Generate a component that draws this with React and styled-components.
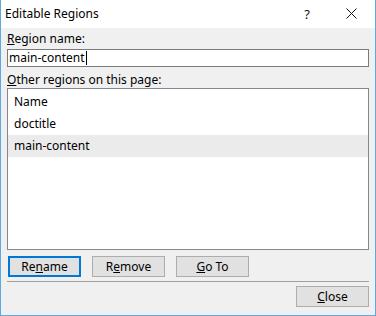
import React from 'react';
import styled, { createGlobalStyle } from 'styled-components';

const GlobalStyle = createGlobalStyle`
  html, body {
    margin: 0;
    padding: 0;
    background: #ffffff;
  }
  body {
    font-family: "Noto Sans", "DejaVu Sans", sans-serif;
    font-size: 12px;
    color: #000000;
  }
`;

const Window = styled.div`
  width: 376px;
  height: 316px;
  box-sizing: border-box;
  border: 1px solid #5aa9e0;
  border-top: none;
  background: #f0f0f0;
  display: flex;
  flex-direction: column;
`;

const TitleBar = styled.div`
  height: 28px;
  background: #ffffff;
  display: flex;
  align-items: center;
  padding: 0 2px 1px 4px;
  box-sizing: border-box;
`;

const Title = styled.span`
  flex: 1;
  font-size: 12px;
`;

const TitleButton = styled.div`
  width: 44px;
  height: 27px;
  display: flex;
  align-items: center;
  justify-content: center;
  font-size: 13px;
  color: #111;
`;

const Body = styled.div`
  flex: 1;
  display: flex;
  flex-direction: column;
  padding: 0 6px;
`;

const Label = styled.div`
  line-height: 16px;
  margin-top: ${p => p.$top}px;
`;

const TextBox = styled.div`
  margin-top: 2px;
  height: 18px;
  box-sizing: border-box;
  border: 1px solid #7a7a7a;
  background: #ffffff;
  display: flex;
  align-items: center;
  padding-left: 1px;
  line-height: 16px;
`;

const Caret = styled.span`
  display: inline-block;
  width: 1px;
  height: 14px;
  background: #000;
  margin-left: 1px;
`;

const ListBox = styled.div`
  height: 162px;
  box-sizing: border-box;
  border: 1px solid #828790;
  background: #ffffff;
  padding-top: 2px;
`;

const Row = styled.div`
  height: 22px;
  line-height: 22px;
  padding-left: 6px;
  background: ${p => (p.$selected ? '#ebebeb' : 'transparent')};
`;

const ButtonRow = styled.div`
  display: flex;
  gap: 11px;
  margin-top: 6px;
  padding-left: 1px;
`;

const Button = styled.div`
  width: 73px;
  height: 21px;
  box-sizing: border-box;
  background: #e1e1e1;
  border: ${p => (p.$focused ? '2px solid #0078d7' : '1px solid #adadad')};
  display: flex;
  align-items: center;
  justify-content: center;
`;

const Separator = styled.div`
  margin-top: 4px;
  height: 1px;
  background: #a0a0a0;
`;

const CloseRow = styled.div`
  display: flex;
  justify-content: flex-end;
  margin-top: 4px;
`;

const CloseIcon = () => (
  <svg width="11" height="11" viewBox="0 0 11 11">
    <path d="M0.5 0.5 L10.5 10.5 M10.5 0.5 L0.5 10.5" stroke="#111" strokeWidth="1" fill="none" />
  </svg>
);

export default function App() {
  return (
    <>
      <GlobalStyle />
      <Window>
        <TitleBar>
          <Title>Editable Regions</Title>
          <TitleButton>?</TitleButton>
          <TitleButton>
            <CloseIcon />
          </TitleButton>
        </TitleBar>
        <Body>
          <Label $top={3}>
            <u>R</u>egion name:
          </Label>
          <TextBox>
            main-content
            <Caret />
          </TextBox>
          <Label $top={5}>
            <u>O</u>ther regions on this page:
          </Label>
          <ListBox>
            <Row>Name</Row>
            <Row>doctitle</Row>
            <Row $selected>main-content</Row>
          </ListBox>
          <ButtonRow>
            <Button $focused>
              <span>
                Re<u>n</u>ame
              </span>
            </Button>
            <Button>
              <span>
                R<u>e</u>move
              </span>
            </Button>
            <Button>
              <span>
                <u>G</u>o To
              </span>
            </Button>
          </ButtonRow>
          <Separator />
          <CloseRow>
            <Button>
              <span>
                <u>C</u>lose
              </span>
            </Button>
          </CloseRow>
        </Body>
      </Window>
    </>
  );
}
